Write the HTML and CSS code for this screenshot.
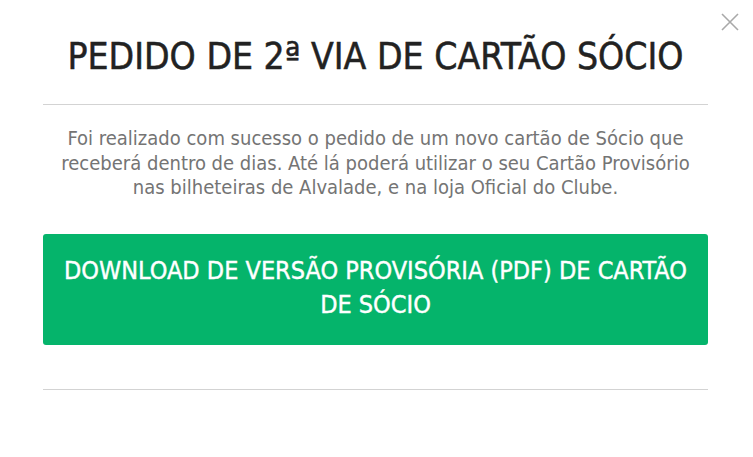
FILE: index.html
```html
<!DOCTYPE html>
<html lang="pt">
  <head>
    <title>Pedido de 2ª via</title>
    <meta charset="UTF-8" />
    <meta name="viewport" content="width=device-width" />
    <link rel="stylesheet" href="styles.css">
  </head>
  <body>
    <section class="modal">
      <button class="modal__close" aria-label="Fechar">
        <svg width="18" height="18" viewBox="0 0 18 18">
          <path d="M1 1 L17 17 M17 1 L1 17" stroke="#a9a9a9" stroke-width="1.6" fill="none"/>
        </svg>
      </button>
      <h1 class="modal__title">PEDIDO DE 2ª VIA DE CARTÃO SÓCIO</h1>
      <div class="modal__body">
        <p class="modal__text">Foi realizado com sucesso o pedido de um novo cartão de Sócio que receberá dentro de dias. Até lá poderá utilizar o seu Cartão Provisório nas bilheteiras de Alvalade, e na loja Oficial do Clube.</p>
        <a class="button" href="#">DOWNLOAD DE VERSÃO PROVISÓRIA (PDF) DE CARTÃO DE SÓCIO</a>
      </div>
    </section>
  </body>
</html>
```

FILE: styles.css
```css
body {
  margin: 0;
  background: #ffffff;
  font-family: "DejaVu Sans Condensed", "DejaVu Sans", sans-serif;
}

.modal {
  position: relative;
  width: 753px;
  height: 457px;
  padding: 0 45px 0 43px;
  box-sizing: border-box;
}

.modal__close {
  position: absolute;
  top: 13px;
  right: 14px;
  padding: 0;
  border: none;
  background: none;
}

.modal__title {
  margin: 0;
  padding: 33px 0 23px;
  border-bottom: 1px solid #d3d3d3;
  text-align: center;
  font-size: 37px;
  font-weight: 500;
  line-height: 48px;
  color: #222222;
  -webkit-text-stroke: 0.5px #222222;
}

.modal__body {
  padding: 21px 0 44px;
  border-bottom: 1px solid #d3d3d3;
}

.modal__text {
  margin: 0 0 34px;
  text-align: center;
  font-size: 20px;
  line-height: 24.5px;
  color: #747474;
}

.button {
  display: block;
  padding: 20px 10px 22px;
  border-radius: 3px;
  background: #05b46b;
  text-align: center;
  text-decoration: none;
  font-size: 25px;
  line-height: 34.5px;
  color: #ffffff;
  -webkit-text-stroke: 0.4px #ffffff;
}
```
